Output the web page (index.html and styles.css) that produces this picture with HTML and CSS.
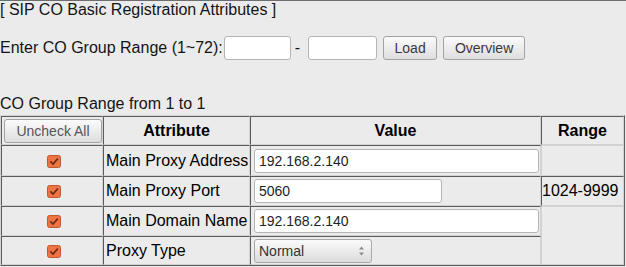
FILE: index.html
```html
<!DOCTYPE html>
<html>
<head>
<meta charset="utf-8">
<link rel="stylesheet" href="styles.css">
</head>
<body>
<div class="page">
  <div class="title">[ SIP CO Basic Registration Attributes ]</div>
  <div class="range-form">
    <span class="label">Enter CO Group Range (1~72):</span>
    <input class="field range-from" type="text" value="">
    <span class="dash">-</span>
    <input class="field range-to" type="text" value="">
    <button class="btn btn-load">Load</button>
    <button class="btn btn-overview">Overview</button>
  </div>
  <div class="range-caption">CO Group Range from 1 to 1</div>
  <table class="attr-table">
    <colgroup>
      <col class="c-check">
      <col class="c-attr">
      <col class="c-value">
      <col class="c-range">
    </colgroup>
    <tr class="head-row">
      <th class="check-head"><button class="btn btn-uncheck">Uncheck All</button></th>
      <th>Attribute</th>
      <th>Value</th>
      <th>Range</th>
    </tr>
    <tr class="row-a">
      <td class="check-cell"><svg class="cb" width="14" height="13" viewBox="0 0 14 13"><rect x="0.5" y="0.5" width="13" height="12" rx="2" fill="#ee7446" stroke="#c1582f"/><path d="M3.3 6.4 L6 9 L10.8 3.6" fill="none" stroke="#6a2c14" stroke-width="1.7"/></svg></td>
      <td class="attr">Main Proxy Address</td>
      <td class="value"><input class="field value-wide" type="text" value="192.168.2.140"></td>
      <td class="range empty"></td>
    </tr>
    <tr class="row-b">
      <td class="check-cell"><svg class="cb" width="14" height="13" viewBox="0 0 14 13"><rect x="0.5" y="0.5" width="13" height="12" rx="2" fill="#ee7446" stroke="#c1582f"/><path d="M3.3 6.4 L6 9 L10.8 3.6" fill="none" stroke="#6a2c14" stroke-width="1.7"/></svg></td>
      <td class="attr">Main Proxy Port</td>
      <td class="value"><input class="field value-port" type="text" value="5060"></td>
      <td class="range">1024-9999</td>
    </tr>
    <tr class="row-c">
      <td class="check-cell"><svg class="cb" width="14" height="13" viewBox="0 0 14 13"><rect x="0.5" y="0.5" width="13" height="12" rx="2" fill="#ee7446" stroke="#c1582f"/><path d="M3.3 6.4 L6 9 L10.8 3.6" fill="none" stroke="#6a2c14" stroke-width="1.7"/></svg></td>
      <td class="attr">Main Domain Name</td>
      <td class="value"><input class="field value-wide" type="text" value="192.168.2.140"></td>
      <td class="range empty" rowspan="2"></td>
    </tr>
    <tr class="row-d">
      <td class="check-cell"><svg class="cb" width="14" height="13" viewBox="0 0 14 13"><rect x="0.5" y="0.5" width="13" height="12" rx="2" fill="#ee7446" stroke="#c1582f"/><path d="M3.3 6.4 L6 9 L10.8 3.6" fill="none" stroke="#6a2c14" stroke-width="1.7"/></svg></td>
      <td class="attr">Proxy Type</td>
      <td class="value">
        <div class="select">
          <span class="select-text">Normal</span>
          <svg class="select-arrows" width="7" height="12" viewBox="0 0 7 12"><path d="M1 4.6 L3.5 1.6 L6 4.6 Z M1 7.4 L3.5 10.4 L6 7.4 Z" fill="#8a8a8a"/></svg>
        </div>
      </td>
    </tr>
  </table>
</div>
</body>
</html>
```
FILE: styles.css
```css
html, body {
  margin: 0;
  padding: 0;
  background: #ebebeb;
}
body {
  border-top: 1px solid #6e6e6e;
  font-family: "Liberation Sans", Arial, sans-serif;
  font-size: 16px;
  color: #141414;
}
.title {
  line-height: 18px;
}
.range-form {
  display: flex;
  align-items: center;
  height: 24px;
  margin-top: 17px;
}
.label {
  line-height: 18px;
}
.field {
  box-sizing: border-box;
  height: 24px;
  border: 1px solid #b5b5b5;
  border-radius: 3px;
  background: #fff;
  font-family: "Liberation Sans", Arial, sans-serif;
  font-size: 14px;
  color: #1e1e1e;
  padding: 0 4px;
  margin: 0;
  outline: none;
}
.range-from {
  width: 67px;
  margin-left: 1px;
}
.dash {
  margin-left: 4px;
  margin-right: 8px;
}
.range-to {
  width: 69px;
}
.btn {
  box-sizing: border-box;
  height: 24px;
  margin: 0;
  padding: 0;
  border: 1px solid #a3a3a3;
  border-radius: 3px;
  background: linear-gradient(#fbfbfb, #dedede);
  font-family: "Liberation Sans", Arial, sans-serif;
  font-size: 14px;
  color: #3a3a3a;
}
.btn-load {
  width: 54px;
  margin-left: 6px;
}
.btn-overview {
  width: 82px;
  margin-left: 6px;
}
.range-caption {
  line-height: 18px;
  margin-top: 35px;
}
.attr-table {
  margin-top: 2px;
  width: 625px;
  table-layout: fixed;
  border-collapse: separate;
  border-spacing: 0;
  border: 1px solid;
  border-color: #d4d4d4 #5c5c5c #5c5c5c #d4d4d4;
}
.c-check { width: 102px; }
.c-attr { width: 147px; }
.c-value { width: 291px; }
.c-range { width: 83px; }
.attr-table th,
.attr-table td {
  box-sizing: border-box;
  border: 1px solid;
  border-color: #5c5c5c #d2d2d2 #d2d2d2 #5c5c5c;
  padding: 0 2px;
  vertical-align: middle;
  white-space: nowrap;
}
.attr-table th {
  font-weight: bold;
  text-align: center;
  color: #000;
}
.head-row { height: 29px; }
.row-a { height: 31px; }
.row-b { height: 30px; }
.row-c { height: 30px; }
.row-d { height: 29px; }
.attr-table .check-head {
  padding: 0 1px;
  text-align: left;
}
.btn-uncheck {
  display: block;
  width: 98px;
  color: #555;
  font-weight: normal;
  margin-left: 1px;
}
.attr-table .check-cell {
  text-align: center;
  padding-left: 6px;
  padding-right: 2px;
}
.cb {
  display: block;
  margin: 1px auto 0;
}
.attr-table .attr {
  color: #000;
}
.attr-table .value {
  padding-left: 3px;
}
.value-wide {
  display: block;
  width: 285px;
}
.value-port {
  display: block;
  width: 188px;
}
.attr-table .range {
  padding: 0;
  color: #000;
}
.attr-table .empty {
  border-color: #d2d2d2;
}
.select {
  box-sizing: border-box;
  width: 118px;
  height: 24px;
  border: 1px solid #a8a8a8;
  border-radius: 3px;
  background: linear-gradient(#fafafa, #dcdcdc);
  display: flex;
  align-items: center;
  justify-content: space-between;
  padding: 0 6px 0 4px;
  font-size: 14px;
  color: #333;
}
.select-arrows {
  display: block;
}
```
